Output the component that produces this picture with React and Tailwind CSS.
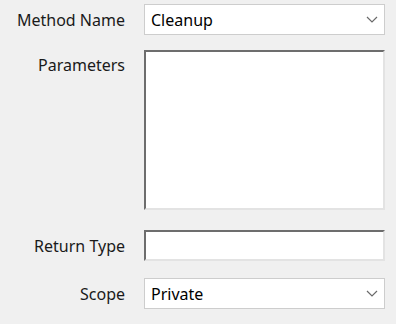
import React from 'react';

// Pequeño chevron del combobox estilo Windows
const Chevron = () => (
    <svg width="12" height="7" viewBox="0 0 12 7" className="mr-[6px]">
        <path d="M1 1 L6 6 L11 1" fill="none" stroke="#6a6a6a" strokeWidth="1.2" />
    </svg>
);

const ComboBox = ({ value, className = '' }) => (
    <div className={`flex items-center justify-between h-[31px] w-[241px] bg-white border border-[#cdcdcd] pl-[6px] text-[16px] text-black ${className}`}>
        <span>{value}</span>
        <Chevron />
    </div>
);

// Caja de texto con borde hundido (3D)
const Sunken = ({ className = '' }) => (
    <div className={`w-[241px] border-t-2 border-l-2 border-t-[#6d6d6d] border-l-[#6d6d6d] border-r-2 border-b-2 border-r-[#e3e3e3] border-b-[#e3e3e3] bg-white ${className}`} />
);

const Label = ({ children, className = '' }) => (
    <div className={`w-[126px] pr-[1px] text-right text-[16px] text-[#1a1a1a] ${className}`}>{children}</div>
);

function App() {
    return (
        <div className="w-[396px] h-[324px] bg-[#f0f0f0] pt-[4px] font-['Segoe_UI','Noto_Sans',sans-serif]">
            <div className="flex items-center gap-[18px]">
                <Label>Method Name</Label>
                <ComboBox value="Cleanup" />
            </div>

            <div className="flex items-start gap-[18px] mt-[15px]">
                <Label className="mt-[3px]">Parameters</Label>
                <Sunken className="h-[160px]" />
            </div>

            <div className="flex items-center gap-[18px] mt-[20px]">
                <Label>Return Type</Label>
                <Sunken className="h-[31px]" />
            </div>

            <div className="flex items-center gap-[18px] mt-[17px]">
                <Label>Scope</Label>
                <ComboBox value="Private" className="h-[30px] bg-[#fcfcfc]" />
            </div>
        </div>
    );
}

export default App;
